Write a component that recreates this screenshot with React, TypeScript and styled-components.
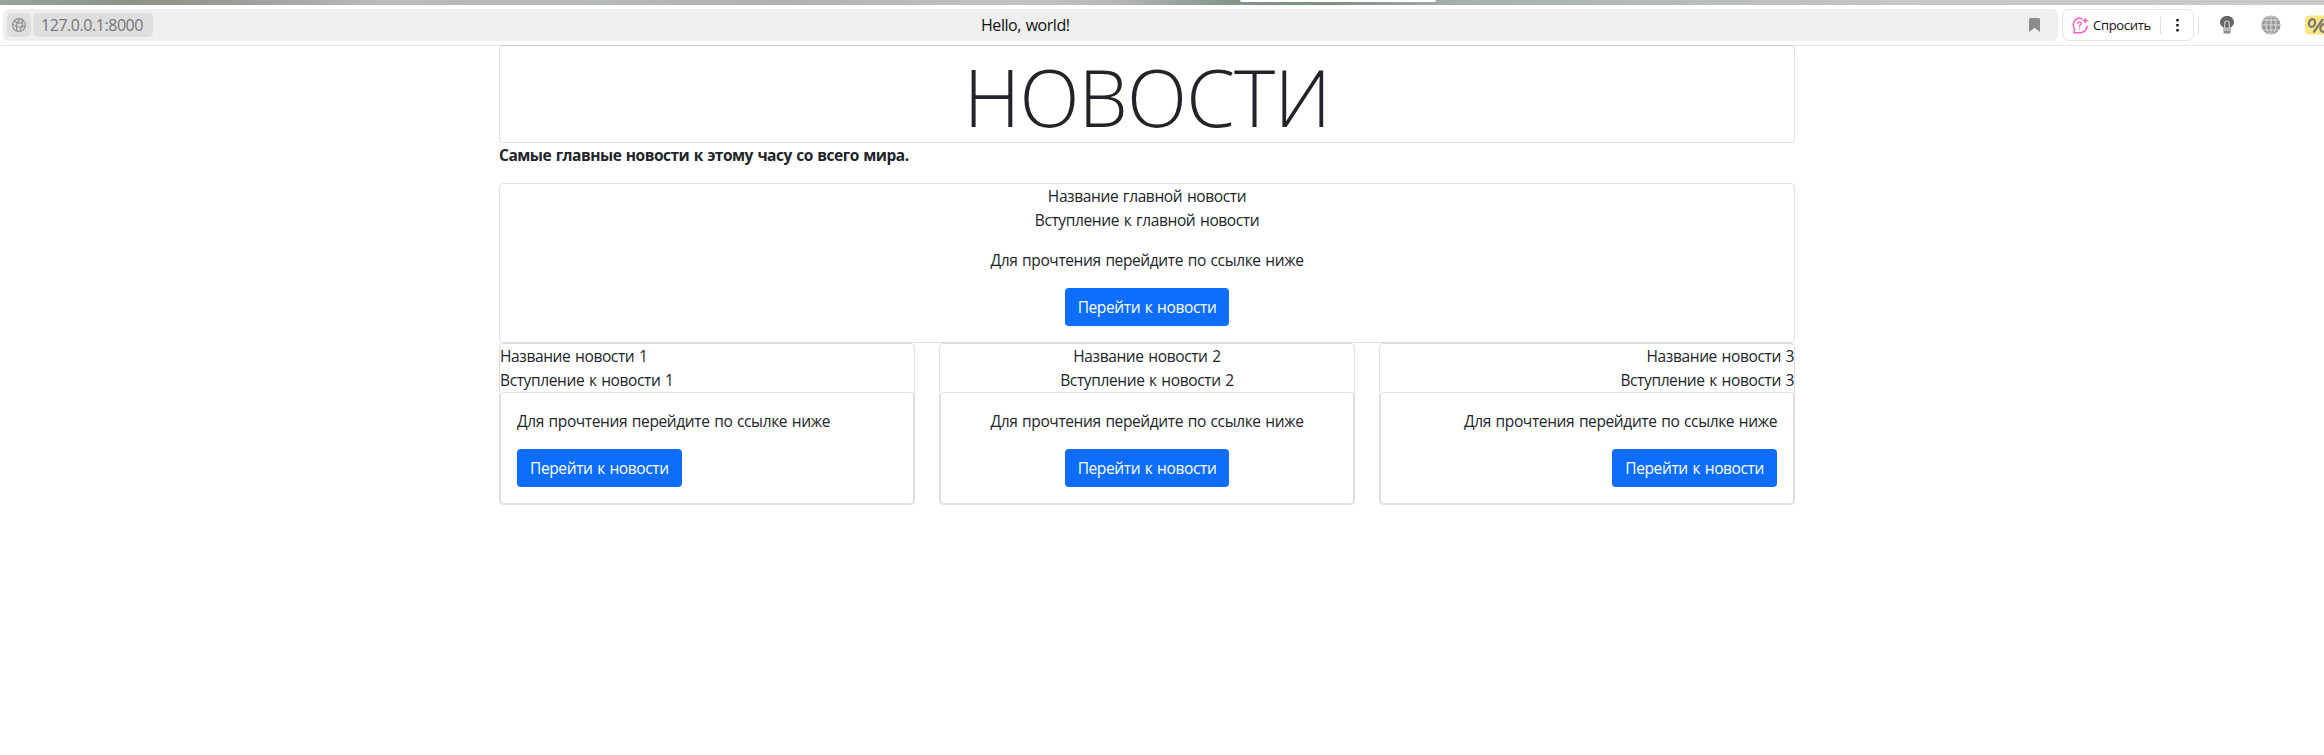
import React, { ReactNode } from "react";
import styled, { createGlobalStyle } from "styled-components";

const Global = createGlobalStyle`
  *, *::before, *::after { box-sizing: border-box; }
  body { margin: 0; background: #fff; color: #212529; font: 400 15.5px/24px "Open Sans", "Noto Sans", sans-serif; letter-spacing: -0.38px; word-spacing: 1px; overflow: hidden; }
  p { margin: 0; }
`;

type Align = "left" | "center" | "right";

const TabStrip = styled.div`
  height: 5px;
  display: flex;
  background: linear-gradient(90deg, #9ba59e 0, #8b9389 125px, #98958f 190px, #aaa8aa 300px, #bcbabf 380px, #b5b8b8 608px, #b2b0b3 785px, #c3c2c7 1020px, #b8b7bb 1110px, #84968a 1230px, #7b9080 1330px, #a5b0aa 1450px, #b4bab8 1645px, #c8c6cb 1900px, #cac9ce 2324px);
`;
const ActiveTab = styled.div`
  margin-left: 1240px;
  width: 196px;
  height: 2px;
  background: #fff;
  border-radius: 0 0 4px 4px;
`;
const Toolbar = styled.header`
  height: 40px;
  display: flex;
  align-items: center;
  padding: 4px 0 4px 3px;
`;
const AddressBar = styled.div`
  width: 2055px;
  height: 32px;
  flex: none;
  display: flex;
  align-items: center;
  padding: 0 18px 0 4px;
  border-radius: 6px;
  background: #efefef;
`;
const SiteButton = styled.div`
  width: 24px;
  height: 24px;
  border-radius: 5px;
  background: #dedede;
  display: flex;
  align-items: center;
  justify-content: center;
`;
const Host = styled.div`
  width: 120px;
  height: 24px;
  margin-left: 2px;
  padding-left: 8px;
  border-radius: 5px;
  background: #dedede;
  color: #777;
  font-size: 16px;
  letter-spacing: -0.45px;
`;
const PageTitle = styled.div`
  margin-left: 828px;
  flex: 1;
  color: #111;
  font-size: 16px;
  letter-spacing: -0.45px;
`;
const AskGroup = styled.div`
  width: 132px;
  height: 32px;
  margin-left: 4px;
  flex: none;
  display: flex;
  align-items: center;
  padding-left: 9px;
  border: 1px solid #e4e4e4;
  border-radius: 7px;
`;
const AskLabel = styled.span`
  width: 71px;
  padding-left: 4px;
  color: #111;
  font-size: 13px;
  letter-spacing: -0.3px;
`;
const Divider = styled.i`
  flex: none;
  width: 1px;
  height: 17px;
  background: #dedede;
`;
const Extensions = styled.div`
  flex: none;
  display: grid;
  grid-template-columns: 21px 42px 44px 20px;
  align-items: center;
  margin-left: 4px;
`;

const Page = styled.main`
  width: 1296px;
  margin-left: 499px;
`;
const ToolbarEdge = styled.div`
  height: 1px;
  margin-bottom: -1px;
  background: #e4e4e4;
`;
const Card = styled.section<{ $align?: Align }>`
  border: 1px solid rgba(0, 0, 0, 0.125);
  border-radius: 4px;
  text-align: ${(p) => p.$align ?? "left"};
`;
const Heading = styled.h1`
  margin: 0;
  height: 96px;
  font: 300 78.5px/101px "Open Sans", sans-serif;
  letter-spacing: -0.8px;
  text-align: center;
`;
const Lead = styled.p`
  margin-bottom: 16px;
  font-weight: 700;
  letter-spacing: -0.5px;
`;
const Line = styled.p``;
const CardBody = styled.div`
  padding: 16px;
`;
const Prompt = styled.p`
  margin-bottom: 16px;
`;
const Button = styled.a`
  display: inline-block;
  vertical-align: top;
  height: 38px;
  padding: 7px 13px;
  border-radius: 4px;
  background: #0d6efd;
  color: #fff;
`;
const Columns = styled.div`
  display: grid;
  grid-template-columns: repeat(3, 1fr);
  gap: 24px;
`;
const DotsMenu = styled.span`
  display: flex;
  margin-left: 15px;
`;

const GlobeIcon = () => (
  <svg width="14" height="14" viewBox="0 0 14 14" fill="none" stroke="#8e8e8e" strokeWidth="1.1">
    <circle cx="7" cy="7" r="6.4" />
    <path d="M.8 6C4 9.500 9 9.500 13 7.500M2 3.200C5 5.500 9 5.500 12 3.200M8.500.8C4.500 4 4 9 5 13M9.500 1C11 5 10 10 7.500 13" />
  </svg>
);
const BookmarkIcon = () => (
  <svg width="11" height="14" viewBox="0 0 11 14" fill="#8c8c8c">
    <path d="M0 1.500Q0 0 1.500 0h8Q11 0 11 1.500V14L5.500 9.800 0 14z" />
  </svg>
);
const AskIcon = () => (
  <svg width="17" height="17" viewBox="0 0 17 17" fill="none" stroke="#f45fc4" strokeWidth="1.500" strokeLinecap="round" strokeLinejoin="round">
    <path d="M9.800 1.800C5 .2 1.200 3.400 1.200 7.600c0 2 .6 3.300 1.500 4.300L1.800 15.700H8c4 0 7-2.700 7-6.400" />
    <path d="M5.800 6.200C6.100 4.300 9.600 4.500 9.300 6.600 9.100 7.900 7.600 7.800 7.600 9.400M7.600 11.800v.1" strokeWidth="1.400" />
    <path d="M13.300.2l1 2.400 2.400 1-2.400 1-1 2.400-1-2.400-2.400-1 2.400-1z" fill="#f45fc4" stroke="none" />
  </svg>
);
const DotsIcon = () => (
  <svg width="3" height="14" viewBox="0 0 3 14" fill="#111">
    <rect x=".3" y="1" width="2.400" height="2.400" />
    <rect x=".3" y="6" width="2.400" height="2.400" />
    <rect x=".3" y="11" width="2.400" height="2.400" />
  </svg>
);
const BulbIcon = () => (
  <svg width="16" height="20" viewBox="0 0 16 20">
    <path d="M8 1C3.800 1 1 3.700 1 7c0 2.700 1.600 4.600 4 5.800h6C13.400 11.600 15 9.700 15 7 15 3.700 12.200 1 8 1z" fill="#666" />
    <path d="M5.700 13V8.200Q5.700 6.200 8 6.200t2.300 2V13" fill="none" stroke="#c8c8c8" strokeWidth="1.300" />
    <path d="M4 12.800h8v3.200H4z" fill="#bbb" />
    <path d="M4.500 16h7v2.500h-7z" fill="#8c8c8c" />
  </svg>
);
const WorldIcon = () => (
  <svg width="20" height="20" viewBox="0 0 20 20">
    <circle cx="10" cy="10" r="9.600" fill="#9b9b9b" />
    <path d="M10 0v20M0 10h20M2 5h16M2 15h16" stroke="#ddd" fill="none" />
    <ellipse cx="10" cy="10" rx="5" ry="9.500" fill="none" stroke="#ddd" />
  </svg>
);
const PercentIcon = () => (
  <svg width="20" height="20" viewBox="0 0 20 20">
    <rect y=".5" width="24" height="19" rx="4" fill="#ffe780" />
    <g fill="none" stroke="#777" strokeWidth="2.200">
      <ellipse cx="7" cy="8" rx="3" ry="3.900" transform="rotate(18 7 8)" />
      <ellipse cx="18.500" cy="13" rx="3" ry="3.900" transform="rotate(18 18.500 13)" />
      <path d="M18 4L8.500 17.500" />
    </g>
  </svg>
);

const ReadMore = (): ReactNode => (
  <CardBody>
    <Prompt>Для прочтения перейдите по ссылке ниже</Prompt>
    <Button>Перейти к новости</Button>
  </CardBody>
);

const columns: Align[] = ["left", "center", "right"];

export default function App() {
  return (
    <>
      <Global />
      <TabStrip><ActiveTab /></TabStrip>
      <Toolbar>
        <AddressBar>
          <SiteButton><GlobeIcon /></SiteButton>
          <Host>127.0.0.1:8000</Host>
          <PageTitle>Hello, world!</PageTitle>
          <BookmarkIcon />
        </AddressBar>
        <AskGroup>
          <AskIcon />
          <AskLabel>Спросить</AskLabel>
          <Divider />
          <DotsMenu><DotsIcon /></DotsMenu>
        </AskGroup>
        <Extensions>
          <Divider />
          <BulbIcon />
          <WorldIcon />
          <PercentIcon />
        </Extensions>
      </Toolbar>
      <ToolbarEdge />
      <Page>
        <Card><Heading>НОВОСТИ</Heading></Card>
        <Lead>Самые главные новости к этому часу со всего мира.</Lead>
        <Card $align="center">
          <Line>Название главной новости</Line>
          <Line>Вступление к главной новости</Line>
          <ReadMore />
        </Card>
        <Columns>
          {columns.map((align, i) => (
            <Card key={align} $align={align}>
              <Line>Название новости {i + 1}</Line>
              <Line>Вступление к новости {i + 1}</Line>
              <Card $align={align}><ReadMore /></Card>
            </Card>
          ))}
        </Columns>
      </Page>
    </>
  );
}
